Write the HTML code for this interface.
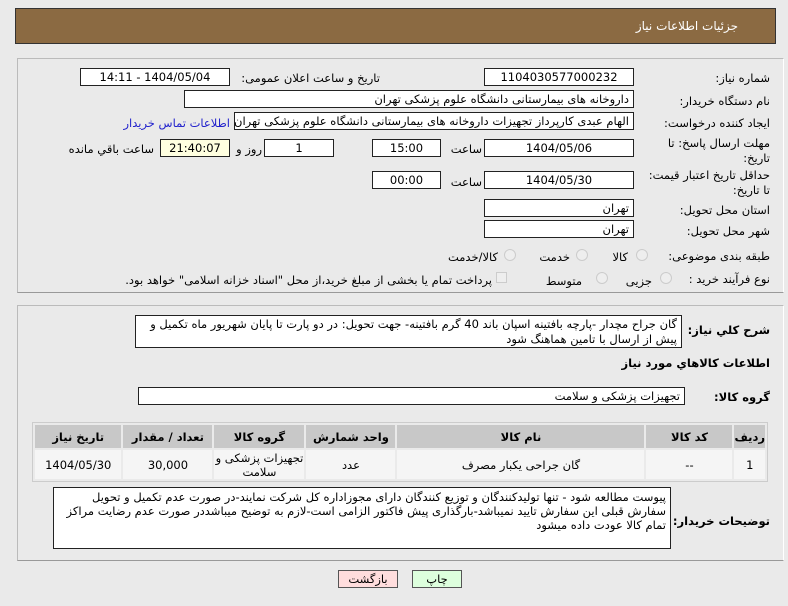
<!DOCTYPE html>
<html><head><meta charset="utf-8"><style>
*{box-sizing:border-box;margin:0;padding:0}
body{width:788px;height:606px;background:#eaeaea;font-family:"DejaVu Sans","Liberation Sans",sans-serif;font-size:11.5px;color:#000;position:relative;overflow:hidden}
.a{position:absolute;white-space:nowrap}
.in{position:absolute;background:#fff;border:1px solid #222;height:18px;line-height:16px;padding:0 4px;overflow:hidden;white-space:nowrap;direction:rtl}
.c{text-align:center}
.l{position:absolute;direction:rtl;text-align:right;white-space:nowrap}
.pan{position:absolute;border:1px solid #bbb;border-right-color:#fff;border-bottom-color:#999;background:#eaeaea}
.rad{position:absolute;width:12px;height:12px;border-radius:50%;border:1px solid #ccc;background:#eee}
table{position:absolute;border-collapse:separate;border-spacing:2px;background:#eaeaea;border:1px solid #ccc}
td,th{text-align:center;font-size:11.5px}
th{background:#c8c8c8;height:23px;font-weight:bold}
td{background:#f5f5f5;height:29px;line-height:14px}
.b{font-weight:bold}
</style></head><body>
<div class="a" style="left:15px;top:8px;width:761px;height:36px;background:#8b6a42;border:1px solid #333"></div>
<div class="l" style="right:50px;top:19px;color:#fff;font-size:12px">جزئیات اطلاعات نیاز</div>

<div class="pan" style="left:17px;top:58px;width:767px;height:235px"></div>
<div class="pan" style="left:17px;top:305px;width:767px;height:256px"></div>

<div class="l" style="right:18px;top:71px">شماره نیاز:</div>
<div class="in c" style="left:484px;top:68px;width:150px">1104030577000232</div>
<div class="l" style="right:408px;top:71px">تاریخ و ساعت اعلان عمومی:</div>
<div class="in c" style="left:80px;top:68px;width:150px">1404/05/04 - 14:11</div>

<div class="l" style="right:18px;top:94px">نام دستگاه خریدار:</div>
<div class="in" style="left:184px;top:90px;width:450px">داروخانه های بیمارستانی دانشگاه علوم پزشکی تهران</div>

<div class="l" style="right:18px;top:116px">ایجاد کننده درخواست:</div>
<div class="in" style="left:234px;top:112px;width:400px">الهام عبدی کارپرداز تجهیزات داروخانه های بیمارستانی دانشگاه علوم پزشکی تهران</div>
<div class="l" style="right:558px;top:116px;color:#2222cc">اطلاعات تماس خریدار</div>

<div class="l" style="right:18px;top:136px;line-height:15px">مهلت ارسال پاسخ: تا<br>تاریخ:</div>
<div class="in c" style="left:484px;top:139px;width:150px">1404/05/06</div>
<div class="l" style="right:306px;top:142px">ساعت</div>
<div class="in c" style="left:372px;top:139px;width:69px">15:00</div>
<div class="in c" style="left:264px;top:139px;width:70px">1</div>
<div class="l" style="right:526px;top:142px">روز و</div>
<div class="in c" style="left:160px;top:139px;width:70px;background:#ffffe0">21:40:07</div>
<div class="l" style="right:634px;top:142px">ساعت باقي مانده</div>

<div class="l" style="right:18px;top:168px;line-height:15px">حداقل تاریخ اعتبار قیمت:<br>تا تاریخ:</div>
<div class="in c" style="left:484px;top:171px;width:150px">1404/05/30</div>
<div class="l" style="right:306px;top:175px">ساعت</div>
<div class="in c" style="left:372px;top:171px;width:69px">00:00</div>

<div class="l" style="right:18px;top:203px">استان محل تحویل:</div>
<div class="in" style="left:484px;top:199px;width:150px">تهران</div>
<div class="l" style="right:18px;top:224px">شهر محل تحویل:</div>
<div class="in" style="left:484px;top:220px;width:150px">تهران</div>

<div class="l" style="right:18px;top:249px">طبقه بندی موضوعی:</div>
<div class="rad" style="left:636px;top:249px"></div><div class="l" style="right:160px;top:250px">کالا</div>
<div class="rad" style="left:576px;top:249px"></div><div class="l" style="right:218px;top:250px">خدمت</div>
<div class="rad" style="left:504px;top:249px"></div><div class="l" style="right:290px;top:250px">کالا/خدمت</div>

<div class="l" style="right:18px;top:272px">نوع فرآیند خرید :</div>
<div class="rad" style="left:660px;top:272px"></div><div class="l" style="right:136px;top:274px">جزیی</div>
<div class="rad" style="left:596px;top:272px"></div><div class="l" style="right:206px;top:274px">متوسط</div>
<div class="a" style="left:496px;top:272px;width:11px;height:11px;border:1px solid #ccc;background:#eee"></div>
<div class="l" style="right:296px;top:273px">پرداخت تمام یا بخشی از مبلغ خرید،از محل "اسناد خزانه اسلامی" خواهد بود.</div>

<div class="l b" style="right:18px;top:323px">شرح کلي نیاز:</div>
<div class="in" style="left:135px;top:315px;width:547px;height:33px;line-height:15px;white-space:normal;padding-top:1px">گان جراح مچدار -پارچه بافتینه اسپان باند 40 گرم بافتینه- جهت تحویل: در دو پارت تا پایان شهریور ماه تکمیل و پیش از ارسال با تامین هماهنگ شود</div>
<div class="l b" style="right:18px;top:356px">اطلاعات کالاهاي مورد نیاز</div>

<div class="l b" style="right:18px;top:390px">گروه کالا:</div>
<div class="in" style="left:138px;top:387px;width:547px">تجهیزات پزشکی و سلامت</div>

<table style="left:32px;top:422px;width:736px;direction:rtl">
<tr><th style="width:25px">ردیف</th><th style="width:86px">کد کالا</th><th style="width:247px">نام کالا</th><th style="width:89px">واحد شمارش</th><th style="width:90px">گروه کالا</th><th style="width:89px">تعداد / مقدار</th><th>تاریخ نیاز</th></tr>
<tr><td>1</td><td>--</td><td>گان جراحی یکبار مصرف</td><td>عدد</td><td>تجهیزات پزشکی و سلامت</td><td>30,000</td><td>1404/05/30</td></tr>
</table>

<div class="l b" style="right:18px;top:514px">توضیحات خریدار:</div>
<div class="in" style="left:53px;top:487px;width:618px;height:62px;line-height:14px;white-space:normal;padding-top:2px">پیوست مطالعه شود - تنها تولیدکنندگان و توزیع کنندگان دارای مجوزاداره کل شرکت نمایند-در صورت عدم تکمیل و تحویل سفارش قبلی این سفارش تایید نمیباشد-بارگذاری پیش فاکتور الزامی است-لازم به توضیح میباشددر صورت عدم رضایت مراکز تمام کالا عودت داده میشود</div>

<div class="a c" style="left:338px;top:570px;width:60px;height:18px;line-height:16px;border:1px solid #555;background:#fdd">بازگشت</div>
<div class="a c" style="left:412px;top:570px;width:50px;height:18px;line-height:16px;border:1px solid #555;background:#dfd">چاپ</div>
</body></html>
